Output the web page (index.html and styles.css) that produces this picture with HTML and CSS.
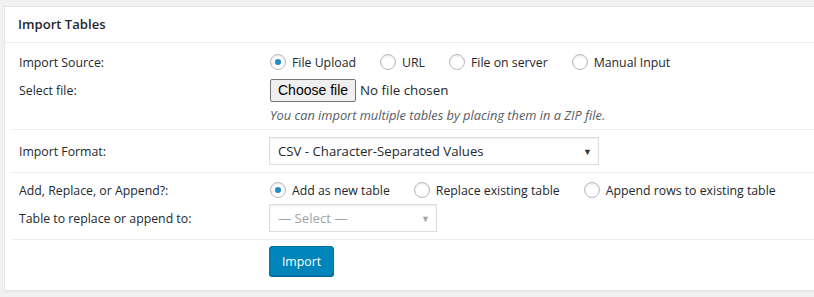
FILE: index.html
```html
<!DOCTYPE html>
<html>
<head>
<meta charset="utf-8">
<link rel="stylesheet" href="styles.css">
</head>
<body>
<div class="postbox">
  <h2 class="hndle">Import Tables</h2>
  <div class="inside">
    <div class="group first">
      <div class="row r24">
        <div class="label">Import Source:</div>
        <div class="field radios">
          <label class="opt"><span class="radio checked"></span>File Upload</label>
          <label class="opt"><span class="radio"></span>URL</label>
          <label class="opt"><span class="radio"></span>File on server</label>
          <label class="opt"><span class="radio"></span>Manual Input</label>
        </div>
      </div>
      <div class="row r32">
        <div class="label">Select file:</div>
        <div class="field">
          <span class="filebtn">Choose file</span><span class="nofile">No file chosen</span>
        </div>
      </div>
      <div class="row r17">
        <div class="label"></div>
        <div class="field"><span class="desc">You can import multiple tables by placing them in a ZIP file.</span></div>
      </div>
    </div>
    <div class="group g2">
      <div class="row r28">
        <div class="label">Import Format:</div>
        <div class="field">
          <div class="select wide"><span>CSV - Character-Separated Values</span><span class="arrow">▼</span></div>
        </div>
      </div>
    </div>
    <div class="group g3">
      <div class="row r24">
        <div class="label">Add, Replace, or Append?:</div>
        <div class="field radios">
          <label class="opt"><span class="radio checked"></span>Add as new table</label>
          <label class="opt"><span class="radio"></span>Replace existing table</label>
          <label class="opt"><span class="radio"></span>Append rows to existing table</label>
        </div>
      </div>
      <div class="row r32">
        <div class="label">Table to replace or append to:</div>
        <div class="field">
          <div class="select narrow disabled"><span>— Select —</span><span class="arrow">▼</span></div>
        </div>
      </div>
    </div>
    <div class="group g4">
      <div class="row">
        <div class="label"></div>
        <div class="field"><span class="button-primary">Import</span></div>
      </div>
    </div>
  </div>
</div>
</body>
</html>
```

FILE: styles.css
```css
html, body {
  margin: 0;
  padding: 0;
  background: #f1f1f1;
  height: 100%;
  overflow: hidden;
}
body {
  font-family: "Open Sans", "Noto Sans", sans-serif;
  font-size: 12.3px;
  color: #23282d;
}
.postbox {
  margin: 6px 0 0 4px;
  width: 830px;
  background: #fff;
  border: 1px solid #e5e5e5;
  box-shadow: 0 1px 1px rgba(0,0,0,0.04);
}
.hndle {
  margin: 0;
  padding: 8px 12px 8px 13px;
  font-size: 13.1px;
  line-height: 19px;
  font-weight: 600;
  color: #23282d;
  border-bottom: 1px solid #eee;
}
.inside {
  padding: 0 0 0 7px;
}
.group {
  border-top: 1px solid #eee;
  padding: 7px 0;
}
.group.first {
  border-top: none;
  padding: 7px 0 6px;
}
.group.g3 { padding: 5px 0; }
.group.g4 { padding: 6px 0 14px; }
.row {
  display: flex;
  align-items: center;
}
.r24 { height: 24px; }
.r32 { height: 32px; }
.r17 { height: 17px; }
.r28 { height: 28px; }
.label {
  width: 250px;
  flex: none;
  padding-left: 7px;
}
.field {
  display: flex;
  align-items: center;
}
.opt {
  display: flex;
  align-items: center;
  margin-right: 23px;
}
.radio {
  width: 14px;
  height: 14px;
  border: 1px solid #b4b9be;
  border-radius: 50%;
  box-shadow: inset 0 1px 2px rgba(0,0,0,0.1);
  margin: 0 6px 0 1px;
  display: flex;
  align-items: center;
  justify-content: center;
  flex: none;
}
.radio.checked::before {
  content: "";
  width: 6px;
  height: 6px;
  border-radius: 50%;
  background: #1e8cbe;
}
.filebtn {
  font-family: "Liberation Sans", Arial, sans-serif;
  font-size: 14px;
  padding: 1px 7px;
  height: 19px;
  line-height: 19px;
  border: 1px solid #767676;
  border-radius: 2px;
  background: #efefef;
  color: #000;
  margin-left: 1px;
}
.nofile {
  margin-left: 4px;
  font-size: 13.33px;
}
.desc {
  font-style: italic;
  font-size: 12.8px;
  color: #555d66;
  margin-left: 1px;
}
.select {
  box-sizing: border-box;
  height: 28px;
  border: 1px solid #ddd;
  box-shadow: inset 0 1px 2px rgba(0,0,0,0.07);
  display: flex;
  align-items: center;
  justify-content: space-between;
  padding: 0 6px 0 8px;
  font-size: 13.2px;
}
.select.wide { width: 330px; }
.select.narrow { width: 168px; }
.select .arrow {
  font-size: 9px;
  color: #32373c;
}
.select.disabled { color: #a0a5aa; }
.select.disabled .arrow { color: #a0a5aa; }
.button-primary {
  box-sizing: border-box;
  display: inline-flex;
  align-items: center;
  justify-content: center;
  height: 30px;
  width: 65px;
  background: #0085ba;
  border: 1px solid #0073aa;
  border-radius: 3px;
  box-shadow: 0 1px 0 #006799;
  color: #fff;
  font-size: 12.3px;
}
```
